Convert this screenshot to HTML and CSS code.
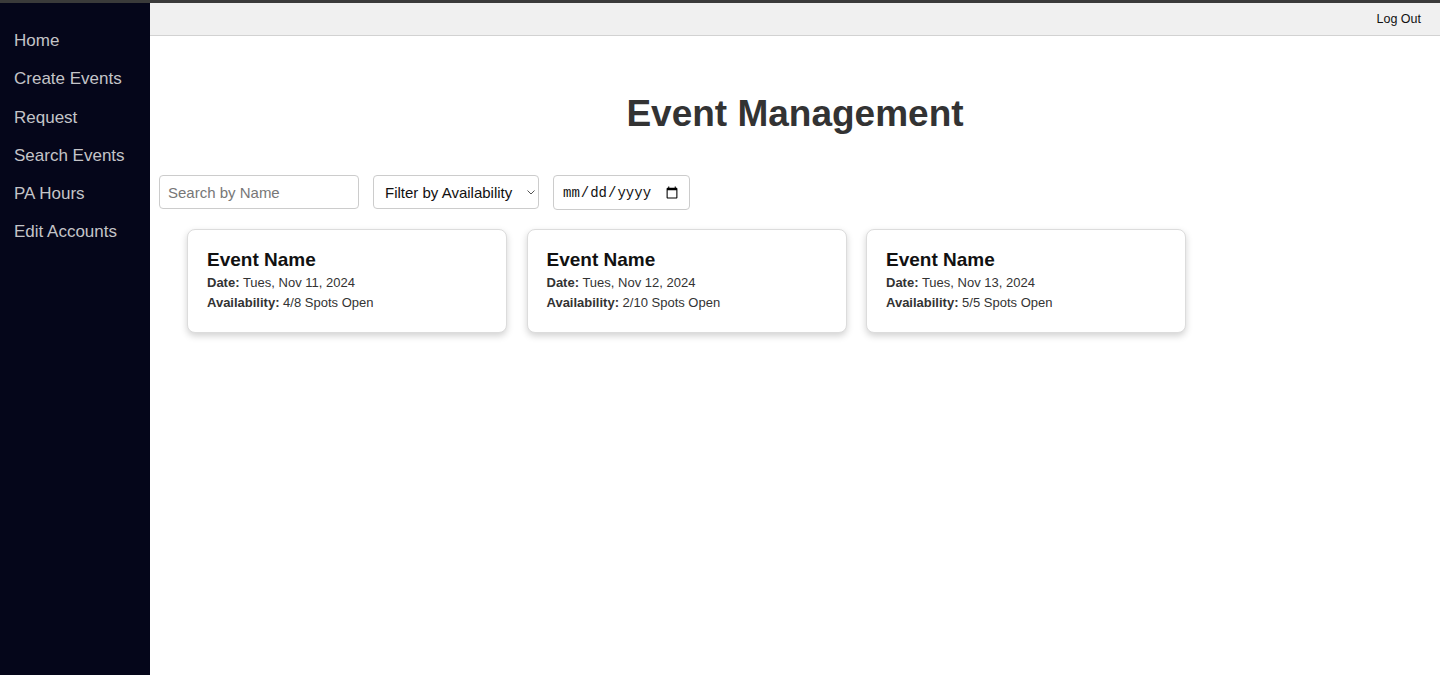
FILE: index.html
```html
<!DOCTYPE html>
<html lang="en">
<head>
<meta charset="utf-8">
<title>Event Management</title>
<link rel="stylesheet" href="styles.css">
</head>
<body>
<div class="app">
  <nav class="sidebar">
    <a class="nav-link" href="#">Home</a>
    <a class="nav-link" href="#">Create Events</a>
    <a class="nav-link" href="#">Request</a>
    <a class="nav-link" href="#">Search Events</a>
    <a class="nav-link" href="#">PA Hours</a>
    <a class="nav-link" href="#">Edit Accounts</a>
  </nav>
  <div class="main">
    <header class="topbar">
      <a class="logout" href="#">Log Out</a>
    </header>
    <h1 class="title">Event Management</h1>
    <div class="controls">
      <input class="ctl search" type="text" placeholder="Search by Name">
      <div class="select-wrap">
        <select class="ctl filter">
          <option>Filter by Availability</option>
          <option>Open</option>
          <option>Full</option>
        </select>
        <svg class="chev" width="8" height="5" viewBox="0 0 8 5"><path d="M0.5 0.5 L4 4 L7.5 0.5" fill="none" stroke="#555" stroke-width="1"/></svg>
      </div>
      <input class="ctl date" type="date">
    </div>
    <div class="cards">
      <div class="card">
        <h2 class="card-title">Event Name</h2>
        <p class="card-line"><b>Date:</b> Tues, Nov 11, 2024</p>
        <p class="card-line"><b>Availability:</b> 4/8 Spots Open</p>
      </div>
      <div class="card">
        <h2 class="card-title">Event Name</h2>
        <p class="card-line"><b>Date:</b> Tues, Nov 12, 2024</p>
        <p class="card-line"><b>Availability:</b> 2/10 Spots Open</p>
      </div>
      <div class="card">
        <h2 class="card-title">Event Name</h2>
        <p class="card-line"><b>Date:</b> Tues, Nov 13, 2024</p>
        <p class="card-line"><b>Availability:</b> 5/5 Spots Open</p>
      </div>
    </div>
  </div>
</div>
</body>
</html>
```
FILE: styles.css
```css
* { box-sizing: border-box; }
html, body { margin: 0; padding: 0; }
body {
  font-family: "Liberation Sans", Arial, sans-serif;
  background: #ffffff;
  border-top: 3px solid #3a3a3a;
  height: 100vh;
  overflow: hidden;
}
.app {
  display: flex;
  height: 100%;
}
.sidebar {
  width: 150px;
  flex: 0 0 150px;
  background: #05061a;
  padding-top: 19px;
  display: flex;
  flex-direction: column;
}
.nav-link {
  display: block;
  color: #c4c4c8;
  text-decoration: none;
  font-size: 17px;
  line-height: 20.3px;
  padding: 9px 14px;
}
.main {
  flex: 1;
  display: flex;
  flex-direction: column;
}
.topbar {
  height: 33px;
  background: #f0f0f0;
  border-bottom: 1px solid #d2d2d2;
  display: flex;
  align-items: center;
  justify-content: flex-end;
  padding-right: 19px;
}
.logout {
  color: #111;
  text-decoration: none;
  font-size: 12.5px;
}
.title {
  margin: 57px 0 0;
  text-align: center;
  font-size: 37px;
  line-height: 42px;
  font-weight: bold;
  color: #333333;
}
.controls {
  display: flex;
  gap: 14px;
  margin: 40px 0 0 9px;
  align-items: flex-start;
}
.ctl {
  height: 34px;
  border: 1px solid #cccccc;
  border-radius: 4px;
  background: #fff;
  font-family: "Liberation Sans", Arial, sans-serif;
  font-size: 15px;
  color: #111;
}
.search {
  width: 200px;
  padding: 0 8px;
}
.search::placeholder { color: #777; }
.select-wrap {
  position: relative;
  width: 166px;
  height: 34px;
}
.filter {
  width: 166px;
  padding: 0 20px 0 11px;
  appearance: none;
  -webkit-appearance: none;
}
.chev {
  position: absolute;
  right: 4px;
  top: 15px;
  width: 8px;
  height: 5px;
  pointer-events: none;
}
.date {
  width: 137px;
  height: 35px;
  padding: 0 8px;
  font-family: "Liberation Mono", "Courier New", monospace;
  font-size: 14px;
}
.cards {
  display: flex;
  gap: 19.5px;
  margin: 19px 0 0 37px;
}
.card {
  width: 320px;
  height: 104px;
  background: #fff;
  border: 1px solid #dcdcdc;
  border-radius: 8px;
  box-shadow: 0 3px 7px rgba(0, 0, 0, 0.18);
  padding: 17px 20px 0 19px;
}
.card-title {
  margin: 0;
  font-size: 19px;
  line-height: 26px;
  font-weight: bold;
  color: #111;
}
.card-line {
  margin: 0;
  font-size: 13px;
  line-height: 20px;
  color: #333;
}
.card-line b { color: #333; }
```
